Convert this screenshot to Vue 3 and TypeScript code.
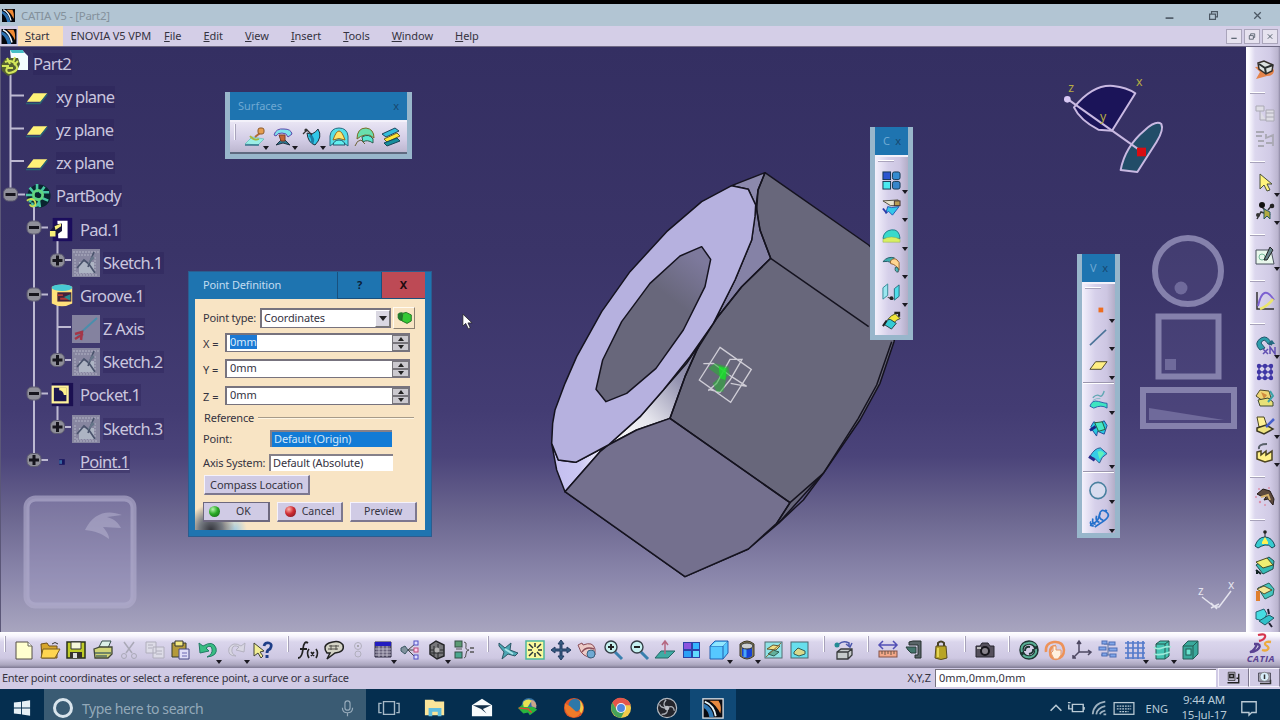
<template>
  <div class="screen">
    <!-- Window title bar -->
    <header class="titlebar">
      <svg class="app-icon" viewBox="0 0 20 20" v-html="icons.catia"></svg>
      <span class="title-text">CATIA V5 - [Part2]</span>
      <div class="window-btns">
        <svg viewBox="0 0 20 20" v-html="icons.minimize"></svg>
        <svg viewBox="0 0 20 20" v-html="icons.restore"></svg>
        <svg viewBox="0 0 20 20" v-html="icons.close"></svg>
      </div>
    </header>

    <nav class="menubar">
      <svg class="menu-icon" viewBox="0 0 20 20" v-html="icons.catia"></svg>
      <span
        v-for="item in menu"
        :key="item"
        class="menu-item"
        :class="{ active: item === 'Start', plain: item.startsWith('ENOVIA') }"
        >{{ item }}</span
      >
      <div class="doc-btns">
        <svg viewBox="0 0 20 20" v-html="icons.minimize"></svg>
        <svg viewBox="0 0 20 20" v-html="icons.restore"></svg>
        <svg viewBox="0 0 20 20" v-html="icons.close"></svg>
      </div>
    </nav>

    <div class="workspace">
      <main class="viewport">
        <!-- Nut solid -->
        <svg class="solid" viewBox="0 0 1200 1320">
          <defs>
            <linearGradient id="chamfer" x1="0" y1="1" x2="1" y2="0">
              <stop offset="0" stop-color="#ffffff" />
              <stop offset="0.35" stop-color="#e4e4ec" />
              <stop offset="0.7" stop-color="#9493b0" />
              <stop offset="1" stop-color="#7a7893" />
            </linearGradient>
            <linearGradient id="chamferLow" x1="0" y1="0" x2="1" y2="0">
              <stop offset="0" stop-color="#c3beef" />
              <stop offset="0.5" stop-color="#cbc7f3" />
              <stop offset="1" stop-color="#ffffff" />
            </linearGradient>
            <linearGradient id="bore" x1="0.85" y1="0.05" x2="0.68" y2="0.35">
              <stop offset="0" stop-color="#7d799c" />
              <stop offset="1" stop-color="#68677b" />
            </linearGradient>
          </defs>
          <g stroke="#15131f" stroke-width="4.500" stroke-linejoin="round">
            <path
              fill="#68677b"
              d="M705 68 1016 285 1130 400 1092 575 1050 700 990 810 880 970 745 1120 655 1197 465 1280 105 1025 235 885Z"
            />
            <path fill="#8c89ad" d="M605 107 705 68 684 120 678 168 655 118Z" />
            <path fill="#8582a6" d="M678 165 690 240 722 325 635 410 560 505 550 520 615 390 665 270Z" />
            <path fill="url(#chamfer)" d="M510 580 465 680 420 805 320 840 235 885 330 800 400 720 470 640Z" />
            <path fill="url(#chamferLow)" d="M65 880 85 930 137 937 235 885 210 905 105 1025 80 960Z" />
            <path
              fill="#74708e"
              d="M420 805 320 840 235 885 210 905 105 1025 465 1280 655 1197 740 1120 780 1058Z"
            />
            <path
              fill="#b6b1df"
              d="M605 107 655 118 677 165 675 200 665 270 615 390 550 520 480 620 400 720 330 800 235 885 137 937 85 930 65 880 68 820 75 780 105 700 140 620 215 485 300 365 410 245 515 155Z"
            />
            <path
              fill="url(#bore)"
              d="M515 290 542 328 525 410 460 540 378 655 290 730 228 755 198 718 218 630 275 515 360 400 450 318Z"
            />
            <path
              fill="none"
              d="M705 68 684 120 680 180 690 240 722 325 1016 530 M722 325 635 410 560 505 500 600 465 680 420 805 780 1058 880 970 M740 1120 780 1058 M1085 575 1040 705 985 805 880 970 820 1050 745 1120"
            />
          </g>
          <path
            d="M570 592 664 658 602 757 508 690Z M520 641 550 640 605 680 650 709 M602 700 650 709 M535 722 560 700 600 628 636 628 600 690 570 727 535 718"
            fill="none"
            stroke="#cfcdd6"
            stroke-width="4"
          />
          <path
            d="M535 655 555 640 595 650 600 675 590 680 580 725 560 725 548 700 570 680Z"
            fill="#20b92c"
            opacity="0.5"
          />
          <path d="M566 648 590 655 586 690 570 685Z" fill="#19e02a" opacity="0.8" />
        </svg>

        <!-- Specification tree -->
        <div class="tree">
          <svg class="tree-lines" viewBox="0 0 180 440">
            <path
              d="M10.5 28V142 M10.5 48.500H24 M10.5 81.500H24 M10.500 114H24 M10.500 147.500H25 M34 158V412 M34 180.500H48 M34 247.500H48 M34 346.500H48 M34 413H48 M57.500 190V213H71 M57.500 257V313H71 M57.500 280H71 M57.500 356V380H71"
            />
            <g v-for="(n, i) in nodes" :key="i" :transform="`translate(${n.x} ${n.y})`">
              <rect class="knob" x="-7" y="-6.500" width="14" height="13" rx="5" />
              <path class="knob-sign" :d="n.plus ? 'M-5 0H5M0 -5V5' : 'M-5 0H5'" />
            </g>
          </svg>
          <div v-for="row in tree" :key="row.label" class="tree-row" :class="'lvl' + row.level">
            <svg
              class="tree-icon"
              :class="row.icon"
              viewBox="0 0 28 28"
              v-html="treeIcons[row.icon]"
            ></svg>
            <span class="tree-label" :class="{ current: row.label === 'Point.1' }">{{
              row.label
            }}</span>
          </div>
        </div>

        <!-- Touch pads of the immersive overlay -->
        <svg class="pad-left" viewBox="0 0 114 114">
          <rect x="3.500" y="3.500" width="107" height="107" rx="9" />
          <path d="M62 35C70 18 84 14 99 20L84 22C92 24 96 29 98 33L80 32C84 37 86 40 86 44C78 38 72 36 62 35Z" />
        </svg>
        <svg class="pads-right" viewBox="0 0 100 196">
          <circle class="ring" cx="50" cy="37" r="33" />
          <circle class="knob-soft" cx="43" cy="54" r="6.500" />
          <rect class="ring" x="20.500" y="82.500" width="60" height="60" />
          <rect class="knob-soft" x="27" y="125" width="11" height="11" />
          <rect class="ring" x="5" y="156" width="91" height="36" />
          <path class="knob-soft" d="M11 174V186H86Z" />
        </svg>

        <!-- 3D compass -->
        <svg class="compass" viewBox="0 0 300 300">
          <path d="M72 142Q130 72 190 78Q230 82 256 100L186 212L145 209Q90 180 72 142Z" fill="#1b1459" />
          <path d="M212 330Q225 260 285 210Q318 180 334 192Q342 210 320 245L262 336Z" fill="#224d68" />
          <path d="M54 118 274 274" />
          <circle cx="52" cy="118" r="10" fill="#d9c9f5" stroke="none" />
          <rect x="261" y="263" width="27" height="26" fill="#d90d12" stroke="none" />
          <text x="55" y="97">z</text>
          <text x="258" y="78">x</text>
          <text x="150" y="183">y</text>
        </svg>

        <svg class="axis" viewBox="0 0 42 34">
          <path d="M7 14 20 24 24 24 36 8 M16 20 22 26 M16 25 24 21" />
          <text x="3" y="12">z</text>
          <text x="33" y="6">x</text>
        </svg>

        <!-- Floating toolbars -->
        <section v-for="bar in floats" :key="bar.title" class="float" :class="bar.kind">
          <div class="float-title"><span>{{ bar.title }}</span><span class="float-x">x</span></div>
          <div class="float-body">
            <i class="grip"></i>
            <template v-for="(t, i) in bar.tools" :key="i">
              <i v-if="t === '|'" class="divider"></i>
              <span v-else class="tool" :class="{ more: t.endsWith('+') }">
                <svg viewBox="0 0 20 20" v-html="iconFor(t)"></svg>
              </span>
            </template>
          </div>
        </section>

        <!-- Point Definition dialog -->
        <section class="dialog">
          <div class="dialog-head">
            <span class="dialog-title">Point Definition</span>
            <span class="head-btn">?</span>
            <span class="head-btn danger">X</span>
          </div>
          <div class="dialog-body">
            <div class="row type-row">
              <label>Point type:</label>
              <div class="combo"><span>Coordinates</span><i class="combo-arrow"></i></div>
              <div class="lock-btn"><svg viewBox="0 0 20 20" v-html="icons.lock"></svg></div>
            </div>
            <div v-for="axis in ['X', 'Y', 'Z']" :key="axis" class="row coord">
              <label>{{ axis }} =</label>
              <div class="spin">
                <span :class="{ selected: axis === 'X' }">{{ coords[axis] }}</span>
                <div class="spin-btns"><i class="up"></i><i class="down"></i></div>
              </div>
            </div>
            <div class="row group"><span>Reference</span><i></i></div>
            <div class="row ref">
              <label>Point:</label><span class="field chosen">Default (Origin)</span>
            </div>
            <div class="row ref axis-row">
              <label>Axis System:</label><span class="field">Default (Absolute)</span>
            </div>
            <button class="btn wide">Compass Location</button>
            <div class="actions">
              <button class="btn ok"><i class="led green"></i>OK</button>
              <button class="btn"><i class="led red"></i>Cancel</button>
              <button class="btn">Preview</button>
            </div>
          </div>
        </section>

        <svg class="pointer" viewBox="0 0 12 18">
          <path d="M1 1V14L4 11L7 17L9 16L6.500 10.500H11Z" fill="#fff" stroke="#222" stroke-width="0.800" />
        </svg>
      </main>

      <aside class="side">
        <template v-for="(t, i) in sideTools" :key="i">
          <i v-if="t === '|'" class="sep"></i>
          <span v-else class="tool" :class="{ more: t.endsWith('+') }">
            <svg viewBox="0 0 20 20" v-html="iconFor(t)"></svg>
          </span>
        </template>
      </aside>
    </div>

    <div class="bottom-bar">
      <template v-for="(t, i) in bottomTools" :key="i">
        <i v-if="t === '|'" class="sep"></i>
        <span v-else class="tool" :class="{ more: t.endsWith('+'), slim: t === 'light' }">
          <svg viewBox="0 0 20 20" v-html="iconFor(t)"></svg>
        </span>
      </template>
      <div class="brand">
        <svg viewBox="0 0 24 20">
          <path d="M9 1Q17-1 16 3Q15 6 10 7" stroke="#d5344d" />
          <path d="M5 10H9Q13 12 8 16Q5 18 1 18Q6 16 8 10" stroke="#5a4292" />
          <path d="M22 8Q16 7 16 10Q16 11 18 12Q21 14 18 16Q16 17 13 16" stroke="#ecaa3c" />
        </svg>
        <span>CATIA</span>
      </div>
    </div>

    <footer class="status">
      <span class="status-msg">Enter point coordinates or select a reference point, a curve or a surface</span>
      <span class="status-xyz">X,Y,Z</span>
      <span class="status-input">0mm,0mm,0mm</span>
      <span class="status-btn"><svg viewBox="0 0 20 20" v-html="icons.stMonitor"></svg></span>
      <span class="status-btn"><svg viewBox="0 0 20 20" v-html="icons.stInfo"></svg></span>
    </footer>

    <!-- Windows taskbar -->
    <div class="taskbar">
      <div class="start"><svg viewBox="0 0 20 20" v-html="icons.windows"></svg></div>
      <div class="search">
        <i class="cortana"></i>
        <span>Type here to search</span>
        <svg viewBox="0 0 20 20" v-html="icons.mic"></svg>
      </div>
      <div v-for="app in apps" :key="app" class="app" :class="{ open: app === 'catiaTask' }">
        <svg viewBox="0 0 24 24" v-html="icons[app]"></svg>
      </div>
      <div class="tray">
        <svg v-for="t in tray" :key="t" :class="t" viewBox="0 0 24 20" v-html="icons[t]"></svg>
        <span class="lang">ENG</span>
        <div class="clock"><span>9:44 AM</span><span>15-Jul-17</span></div>
        <svg class="note" viewBox="0 0 20 20" v-html="icons.note"></svg>
      </div>
    </div>
  </div>
</template>

<script setup lang="ts">
  interface TreeRow {
    label: string;
    level: number;
    icon: string;
  }

  const menu = ['Start', 'ENOVIA V5 VPM', 'File', 'Edit', 'View', 'Insert', 'Tools', 'Window', 'Help'];

  const tree: TreeRow[] = [
    { label: 'Part2', level: 0, icon: 'part' },
    { label: 'xy plane', level: 1, icon: 'plane' },
    { label: 'yz plane', level: 1, icon: 'plane' },
    { label: 'zx plane', level: 1, icon: 'plane' },
    { label: 'PartBody', level: 1, icon: 'body' },
    { label: 'Pad.1', level: 2, icon: 'pad' },
    { label: 'Sketch.1', level: 3, icon: 'sketch' },
    { label: 'Groove.1', level: 2, icon: 'groove' },
    { label: 'Z Axis', level: 3, icon: 'zaxis' },
    { label: 'Sketch.2', level: 3, icon: 'sketch' },
    { label: 'Pocket.1', level: 2, icon: 'pocket' },
    { label: 'Sketch.3', level: 3, icon: 'sketch' },
    { label: 'Point.1', level: 2, icon: 'point' },
  ];

  // Expand / collapse handles of the tree
  const nodes = [
    { x: 10.5, y: 147.5, plus: false },
    { x: 34, y: 180.5, plus: false },
    { x: 34, y: 247.5, plus: false },
    { x: 34, y: 346.5, plus: false },
    { x: 34, y: 413, plus: true },
    { x: 57.5, y: 213.5, plus: true },
    { x: 57.5, y: 313, plus: true },
    { x: 57.5, y: 380, plus: true },
  ];

  const coords: Record<string, string> = { X: '0mm', Y: '0mm', Z: '0mm' };

  // A trailing "+" means the tool has a flyout, "|" is a separator
  const floats = [
    { title: 'Surfaces', kind: 'flat', tools: ['extrude+', 'revolve+', 'sweep+', 'fill', 'loft', 'blend'] },
    { title: 'C', kind: 'tall c', tools: ['join+', 'trim+', 'boundary+', 'fillet+', 'translate+', 'extrapolate'] },
    {
      title: 'V',
      kind: 'tall w',
      tools: ['point+', 'line+', 'plane+', '|', 'project+', 'intersect', 'parallel+', '|', 'circle+', 'helix+'],
    },
  ];

  const sideTools = [
    'wireframe', '|', 'ghostA', 'ghostB', '|', 'arrow+', 'selector+', '|', 'sketcher+', '|', 'law', '|',
    'repeat+', 'grid', 'catalog', 'scan+', 'factory+', '|', 'bird', '|', 'curvature', 'draft', 'draftB', 'porcupine',
  ];

  const bottomTools = [
    '|', 'newDoc', 'open', 'save', 'print', 'cut', 'copy', 'paste', 'undo+', 'redo+', 'help', '|',
    'formula', 'comment', 'light', 'table+', 'relations', 'cage+', 'equiv', '|',
    'fly', 'fit', 'pan', 'rotate', 'zoomIn', 'zoomOut', 'normal', 'quad', 'cube+', 'cylinder+', 'hide', 'swap', '|',
    'box', '|', 'measure', 'caliper', 'weight', '|', 'camera', '|',
    'update', 'manual', 'axes', 'history', 'mesh+', 'bodyA+', 'bodyB',
  ];

  const apps = ['taskview', 'explorer', 'mail', 'idm', 'firefox', 'chrome', 'obs', 'catiaTask'];
  const tray = ['caret', 'battery', 'wifi', 'keyboard'];

  const K = '#20303a';

  const icons: Record<string, string> = {
    catia: `<path d="M0 0H20V20H0Z" fill="#05060c"/><path d="M0 3Q10 6 13 20H8Q6 11 0 7Z" fill="#2b6fb0"/><path d="M2 1Q11 5 14 18" stroke="#e8f5ff" stroke-width="2" fill="none"/><path d="M7 1H16Q19 6 18 15Q14 6 7 1Z" fill="#f08a35"/>`,
    minimize: `<path d="M4 14H16" stroke="#4b5763" stroke-width="2.500"/>`,
    restore: `<path d="M4 8H13V16H4ZM7 8V4H16V12H13" fill="none" stroke="#4b5763" stroke-width="1.800"/>`,
    close: `<path d="M5 5 15 15M15 5 5 15" stroke="#4b5763" stroke-width="2"/>`,
    lock: `<path d="M2 6Q4 3 8 4L7 14Q3 14 2 10Z" fill="#237b2d"/><path d="M8 5 12 4 18 7V14L13 17 7 14Z" fill="#36c936" stroke="#19691e"/>`,
    extrude: `<path d="M0 17 7 10 19 12 13 18Z" fill="#9beee6" stroke="#5fb9b8" stroke-width=".7"/><path d="M0 18H14" stroke="#18607b" stroke-width="1.200"/><path d="M5 9Q9 14 14 12" stroke="#a8b53b" stroke-width="1.800"/><path d="M10 10 15 6" stroke="#b26a35" stroke-width="2"/><rect x="13" y="1" width="6" height="6" rx="2" fill="#e59d4e" stroke="#8e5a2b"/>`,
    revolve: `<path d="M1 8Q3 1 11 2Q18 2 19 7L15 10Q14 6 9 6Q4 6 3 9Z" fill="#7ee2ec" stroke="#5b48ad"/><path d="M3 18 8 13 12 13 17 18 10 16Z" fill="#2a7890" stroke="#234"/><path d="M6 8 12 8 12 14 8 14Z" fill="#c36435" stroke="#7d3f2a"/>`,
    sweep: `<path d="M5 6Q11 9 16 2Q21 10 13 18Q6 16 5 6Z" fill="#32c8e8" stroke="${K}"/><path d="M8 8Q12 12 10 16" stroke="#1b7fa6" stroke-width="3"/><path d="M1 7 5 3M5 3 10 8" stroke="#333" stroke-width="1.200"/><circle cx="4" cy="3" r="1.600" fill="#333"/>`,
    fill: `<path d="M1 19V9Q2 1 10 1T19 9V19L15 16Q10 14 5 16Z" fill="#55dfe8" stroke="#286b82"/><path d="M4 13Q7 4 10 4T16 13Q10 10 4 13Z" fill="#ffe46a" stroke="#9a6b1d"/><path d="M4 18Q5 13 10 13T16 18Z" fill="#62f0ef" stroke="#23556c"/>`,
    loft: `<path d="M2 12Q2 1 11 1Q19 2 19 11Q15 7 10 8Q5 9 2 12Z" fill="#69dfad" stroke="#776d25"/><path d="M7 10Q14 6 18 12V16Q12 12 8 15Z" fill="#58e8d2" stroke="#2c5c4c"/><path d="M0 19Q2 13 6 13L10 17" stroke="#6c6135"/>`,
    blend: `<path d="M1 7 14 1 18 4 5 10Z" fill="#34bedb" stroke="#20465d"/><path d="M3 12 16 6 19 9 6 15Z" fill="#ffe635" stroke="#6e6222"/><path d="M3 16 16 11 19 14 6 19Z" fill="#168e9d" stroke="#164456"/>`,
    join: `<rect x="1" y="1" width="8" height="8" fill="#2b55d0" stroke="#15364e"/><rect x="11" y="1" width="8" height="8" rx="2" fill="#338bd0" stroke="#15364e"/><rect x="1" y="11" width="8" height="8" fill="#4aeaf0" stroke="#15364e"/><rect x="11" y="11" width="8" height="8" rx="2" fill="#3685cb" stroke="#15364e"/>`,
    trim: `<path d="M1 2 17 1 17 7 9 7Z" fill="#e9e4d0" stroke="#4f4d3b"/><path d="M4 15 6 8 10 9 18 8 11 17 7 13Z" fill="#33c8ea" stroke="#2259b5"/><path d="M1 10 5 15" stroke="#2d39a8" stroke-width="2"/><rect x="13" y="2" width="6" height="5" fill="#b89d54" stroke="#433"/>`,
    boundary: `<path d="M1 12Q2 4 10 3T19 12Z" fill="#39dacb" stroke="#22798a"/><path d="M1 13Q10 8 19 13V16H1Z" fill="#d9ef62" stroke="#87a950" stroke-width=".5"/>`,
    fillet: `<path d="M1 7Q6 1 13 3L10 8Q6 6 1 7Z" fill="#3dafb0" stroke="#225c66"/><path d="M9 6Q14 1 18 8V16Q15 10 9 9Z" fill="#ffd590" stroke="#93632f"/><path d="M14 13Q18 12 17 18Q13 18 14 13Z" fill="#4bbfc0" stroke="#355"/>`,
    translate: `<path d="M1 5 6 1V13L1 17Z" fill="#9be6ef" stroke="#368a99"/><path d="M13 6 18 2V14L13 18Z" fill="#4fdde9" stroke="#246f7e"/><path d="M6 15 12 17" stroke="#555" stroke-width="1.200"/><circle cx="10" cy="16" r="2" fill="#222"/>`,
    extrapolate: `<path d="M6 9Q10 4 14 3L19 8Q15 9 12 13Z" fill="#f0e33a" stroke="#47502b"/><path d="M2 14Q6 8 9 9L15 13 10 19Z" fill="#35cad4" stroke="#223f45"/><path d="M1 16 5 10M13 2H18V6" stroke="#222" stroke-width="2.200"/>`,
    point: `<rect x="10" y="8" width="5" height="5" fill="#ee6d1e"/>`,
    line: `<path d="M1 18 18 2" stroke="#4b7398" stroke-width="1.700"/>`,
    plane: `<path d="M1 14 7 6H19L13 14Z" fill="#ffee83" stroke="#4a4628"/>`,
    project: `<path d="M4 7Q8 3 11 5T16 0" stroke="#63a8b4" stroke-width="1.500"/><path d="M4 10Q8 7 12 8" stroke="#83b9c4"/><path d="M1 16Q3 9 10 11T19 13V18Q13 14 5 18Z" fill="#3de4c1" stroke="#2763aa"/>`,
    intersect: `<path d="M2 9 5 4 10 6 16 3 19 8 16 17 9 14 8 19 3 12Z" fill="#28cae1" stroke="#214998"/><path d="M6 5 14 4 17 12 10 14Z" fill="#46e7c5" stroke="#285a36"/><path d="M1 13 7 9" stroke="#15278b" stroke-width="3"/>`,
    parallel: `<path d="M1 11Q6 2 12 2L19 8Q13 11 11 18L6 13Z" fill="#36cde7" stroke="#29558b"/><path d="M9 6Q14 4 16 8L11 14Z" fill="#61f1ba"/><path d="M0 11 6 15" stroke="#282b8b" stroke-width="3"/>`,
    circle: `<circle cx="9.500" cy="10" r="8.500" fill="#d8dcef" stroke="#49809f" stroke-width="1.700"/>`,
    helix: `<path d="M1 17 5 18M17 1 19 2M2 13Q0 17 5 15T11 6T18 3T15 13T6 19M4 10Q3 16 7 16M8 7Q6 13 11 14M12 4Q9 10 15 12" stroke="#2470cb" stroke-width="1.800"/>`,
    wireframe: `<path d="M0 7 5 12 1 19 12 16Q19 16 19 10L15 6" fill="#e5844c"/><path d="M3 3 9 1 18 5 17 11 11 14 4 9Z" fill="#dce2df" stroke="#352f2a" stroke-width="1.500"/><path d="M4 4 10 8 18 5M10 8 11 14" stroke="#2b302f" stroke-width="2"/>`,
    ghostA: `<path d="M1 3H9V8H1ZM5 8V17H11M11 7H19V18H11ZM11 10H19M11 14H19" fill="#dedde5" stroke="#aaa9b4"/>`,
    ghostB: `<path d="M1 3H9M1 7H7M3 12H9M3 17H9M11 5V9L18 6V17M11 14H18" stroke="#aaa9b4" stroke-width="1.800"/>`,
    arrow: `<path d="M5 1V16L9 12 12 18 15 17 12 11H17Z" fill="#fff37c" stroke="#48503b"/>`,
    selector: `<path d="M2 18 6 11 12 13M5 4 15 14M18 3 13 9" stroke="#333" stroke-width="1.500"/><circle cx="7" cy="4" r="3" fill="#111"/><circle cx="17" cy="5" r="2.300" fill="#222"/><circle cx="3" cy="14" r="2" fill="#333"/><path d="M9 8V18L12 15 15 18 15 11Z" fill="#b1aa42" stroke="#285a61"/>`,
    sketcher: `<path d="M1 4H16L19 18H1Z" fill="#e8f7ec" stroke="#49505c"/><circle cx="7" cy="11" r="3" stroke="#76b99a"/><path d="M9 14 15 1 18 4 12 14Z" fill="#68858b" stroke="#222"/>`,
    law: `<path d="M2 1V18H19" stroke="#333" stroke-width="1.500"/><path d="M3 15Q8-8 19 9" stroke="#7c61d1" stroke-width="2"/><path d="M5 18Q13 15 18 8" stroke="#ebe66c" stroke-width="2.500"/>`,
    repeat: `<path d="M5 15Q-2 8 6 3Q13-1 17 10L13 9Q9 2 6 8L10 13Z" fill="#2c9dab" stroke="#24566d"/><path d="M12 9H20L17 5" fill="#246b81"/><path d="M8 14 13 19M13 14 8 19M15 19V12L20 19V12" stroke="#6150b2" stroke-width="1.500"/>`,
    grid: `<path d="M4 3V18M10 3V18M16 3V18M2 4H18M2 10H18M2 16H18" stroke="#4b42aa" stroke-width="1.500"/><g fill="#4037a5"><circle cx="4" cy="4" r="2.200"/><circle cx="10" cy="4" r="2.200"/><circle cx="16" cy="4" r="2.200"/><circle cx="4" cy="10" r="2.200"/><circle cx="10" cy="10" r="2.200"/><circle cx="16" cy="10" r="2.200"/><circle cx="4" cy="16" r="2.200"/><circle cx="10" cy="16" r="2.200"/><circle cx="16" cy="16" r="2.200"/></g>`,
    catalog: `<path d="M1 8 5 2 14 3 16 10 8 13Z" fill="#eed574" stroke="#4e4a2c"/><path d="M6 4 12 7 9 11Z" fill="#cf8b3e"/><path d="M3 12 13 10 18 14V18H5Z" fill="#e8e179" stroke="#3f4a34"/><path d="M15 3 18 8 13 14" stroke="#39a2a8" stroke-width="2"/>`,
    scan: `<path d="M2 2 9 2 12 11 4 12Z" fill="#fff295" stroke="#4d4825"/><path d="M2 13 11 10 18 14 9 19 2 16Z" fill="#eee37f" stroke="#3d3a22" stroke-width="1.500"/><path d="M11 12 19 4" stroke="#4660cb" stroke-width="2.500"/>`,
    factory: `<path d="M2 9 6 8V12L11 8V12L17 8V17L10 19 2 16Z" fill="#fff087" stroke="#4e4623" stroke-width="1.500"/><path d="M4 6Q3 1 12 1" stroke="#59606a" stroke-width="2"/>`,
    bird: `<path d="M2 7 8 2 15 4 19 12 18 18 13 12 9 13 12 8 6 9Z" fill="#5c4a3e" stroke="#241c18"/><path d="M6 10 13 8 15 13" stroke="#d6b26c" stroke-width="2"/><g fill="#dc8fa7"><circle cx="4" cy="2" r="1"/><circle cx="1" cy="10" r="1"/><circle cx="5" cy="15" r="1.200"/><circle cx="10" cy="18" r="1"/><circle cx="14" cy="1" r="1"/></g>`,
    curvature: `<path d="M0 16Q3 7 10 7T20 16L17 18Q14 14 10 15T3 18Z" fill="#36cbd0" stroke="#174b58"/><path d="M7 12 10 7 13 12V14H7Z" fill="#fff253"/><path d="M10 7V2" stroke="#222"/><circle cx="10" cy="2" r="1.800" fill="#222"/>`,
    draft: `<path d="M1 9 14 1 19 5 18 13 8 18Z" fill="#35bbb6" stroke="#214f4e"/><path d="M1 6 12 2 18 9 8 12Z" fill="#f0ed72" stroke="#484d25"/><path d="M1 14 6 18M2 18V14" stroke="#122" stroke-width="2"/>`,
    draftB: `<path d="M3 6 14 1 19 7 18 13 10 17Z" fill="#43c5bf" stroke="#24625c"/><path d="M2 7 9 4 17 8 9 12Z" fill="#f3e894" stroke="#554d2e"/><path d="M3 9V19" stroke="#df7e2e" stroke-width="4"/>`,
    porcupine: `<path d="M1 4 9 1 12 6 8 13 1 11Z" fill="#45dce2" stroke="#276474"/><path d="M4 13 14 7 19 10 10 17Z" fill="#31c1ca" stroke="#205763"/><path d="M13 1 14 6M14 15 17 19" stroke="#223" stroke-width="2"/>`,
    newDoc: `<path d="M2 2H14L18 6V19H2Z" fill="#ffffcf" stroke="#554f48"/><path d="M14 2V6H18" fill="#fff" stroke="#665"/>`,
    open: `<path d="M1 4 7 3 9 6H17V18H2Z" fill="#d7a62c" stroke="#70501a"/><path d="M3 9H20L15 18H1Z" fill="#ffd550" stroke="#785e23"/><path d="M12 4Q15 1 18 4" stroke="#333"/>`,
    save: `<path d="M1 2H19V18H1Z" fill="#bfcb27" stroke="#29301c" stroke-width="1.500"/><path d="M5 2H15V9H5Z" fill="#f6f7da" stroke="#333"/><path d="M4 12H16V18H4Z" fill="#35312d"/><rect x="7" y="13" width="4" height="5" fill="#ddd"/>`,
    print: `<path d="M6 7 9 1H18L15 8Z" fill="#dcefe8" stroke="#354d4a"/><path d="M1 9 7 7H19V14L15 18H2Z" fill="#d1d478" stroke="#404638" stroke-width="1.300"/><path d="M2 13H18M3 16H14" stroke="#526b61" stroke-width="1.500"/>`,
    cut: `<path d="M5 2 13 13M15 2 7 13" stroke="#aaa9b7" stroke-width="1.500"/><circle cx="5" cy="16" r="2.500" stroke="#aaa9b7"/><circle cx="15" cy="16" r="2.500" stroke="#aaa9b7"/>`,
    copy: `<path d="M1 2H11V13H1ZM8 7H19V18H8ZM3 5H8M3 8H7M11 11H17M11 14H17" fill="#dddce7" stroke="#b0aebc"/>`,
    paste: `<path d="M1 3H15V17H1Z" fill="#b49a3a" stroke="#353b2c"/><path d="M4 1H12V6H4Z" fill="#f4e982" stroke="#333"/><path d="M8 9H18V19H8Z" fill="#dedcf7" stroke="#494a86"/><path d="M11 13H16M11 16H16" stroke="#6b67b1"/>`,
    undo: `<path d="M1 3 2 13 11 11 8 8Q13 4 14 9T9 17Q20 16 18 8Q15 0 5 6Z" fill="#38bd83" stroke="#237b65"/>`,
    redo: `<path d="M19 3 18 12 10 10 13 7Q7 4 6 9T10 16Q1 16 3 8Q7 1 15 6Z" fill="#d8d6e2" stroke="#b3b1bf"/>`,
    help: `<path d="M1 3V16L5 13 8 18 10 16 7 12 11 11Z" fill="#f2ee94" stroke="#414335"/><path d="M11 6Q12 2 16 3T17 9Q14 10 14 13" stroke="#1e3e87" stroke-width="2.800"/><rect x="12.500" y="15" width="3" height="3" fill="#1e3e87"/>`,
    formula: `<path d="M0 18Q4 18 5 9T10 3M2 9H9" stroke="#222" stroke-width="1.800"/><path d="M11 9Q8 13 11 18M18 9Q21 13 18 18M13 12 16 16M16 12 13 16" stroke="#222" stroke-width="1.600"/>`,
    comment: `<path d="M3 13Q-2 6 5 3Q15-1 19 5Q21 12 11 13L3 19 6 13Z" fill="#d5d4c6" stroke="#222" stroke-width="1.500"/><path d="M5 6H15M4 9H14M7 5V10M12 5V10" stroke="#504e49"/>`,
    light: `<circle cx="10" cy="6" r="3.500" stroke="#b1afbd"/><circle cx="10" cy="14" r="3" stroke="#b1afbd"/><circle cx="10" cy="6" r="1" fill="#999"/>`,
    table: `<path d="M2 2H18V17H2Z" fill="#68637b" stroke="#29273d"/><path d="M2 2H18V6H2Z" fill="#221cc0"/><path d="M2 9H18M2 12H18M2 15H18M6 6V17M10 6V17M14 6V17" stroke="#cbc8d6" stroke-width=".8"/>`,
    relations: `<path d="M8 10 15 4M8 10H15M8 10 15 17" stroke="#444"/><path d="M1 8 5 6 8 10 5 14 1 11Z" fill="#80929d" stroke="#3c5964"/><rect x="14" y="1" width="4" height="4" fill="#ddf" stroke="#514fc2"/><rect x="14" y="8" width="4" height="4" fill="#fce" stroke="#bb4c78"/><rect x="14" y="15" width="4" height="4" fill="#ddf" stroke="#514fc2"/>`,
    cage: `<path d="M3 5 9 1 17 5V16L10 19 3 14Z" fill="#77777b" stroke="#252629" stroke-width="1.500"/><path d="M7 6V16M11 4V18M3 10H17M4 13H16" stroke="#292b2c"/><circle cx="10" cy="10" r="2.500" fill="#b3b2b3"/>`,
    equiv: `<rect x="1" y="1" width="7" height="6" fill="#5c9b74" stroke="#344f44"/><rect x="1" y="12" width="7" height="6" fill="#4ba78f" stroke="#344f44"/><path d="M2 9H8M10 2Q13 2 12 6T15 10Q12 10 12 14T10 18" stroke="#555"/><path d="M16 8H20M16 12H20" stroke="#555" stroke-width="1.500"/>`,
    fly: `<path d="M1 3 7 8 13 3 12 10 20 13 17 16 10 14 4 19 6 12 1 6Z" fill="#4ca6b4" stroke="#2b5665"/><path d="M7 9 15 14" stroke="#a8e4e8" stroke-width="2"/>`,
    fit: `<rect x="1" y="1" width="18" height="18" fill="#fbf99d" stroke="#4db69c" stroke-width="1.500"/><path d="M4 4 8 8M16 4 12 8M4 16 8 12M16 16 12 12M3 10H7M13 10H17M10 3V7M10 13V17" stroke="#26353a" stroke-width="1.500"/>`,
    pan: `<path d="M10 0 13 4H11V9H16V7L20 10 16 13V11H11V16H13L10 20 7 16H9V11H4V13L0 10 4 7V9H9V4H7Z" fill="#355a81" stroke="#243c62"/>`,
    rotate: `<path d="M1 5 5 3 6 5Q16 1 18 9V15L13 18 7 15 4 12Z" fill="#edcbc7" stroke="#8a4c58"/><path d="M5 12Q9 6 17 9" stroke="#8a4c58" stroke-width="1.500"/><circle cx="14" cy="14" r="4" fill="#6fa9d3" stroke="#39617e"/>`,
    zoomIn: `<path d="M12 12 19 19" stroke="#397fae" stroke-width="3"/><circle cx="8" cy="7" r="6" fill="#c6f1f0" stroke="#343e46" stroke-width="1.400"/><path d="M5 7H11M8 4V10" stroke="#222" stroke-width="2"/>`,
    zoomOut: `<path d="M12 12 19 19" stroke="#397fae" stroke-width="3"/><circle cx="8" cy="7" r="6" fill="#c6f1f0" stroke="#343e46" stroke-width="1.400"/><path d="M5 7H11" stroke="#222" stroke-width="2"/>`,
    normal: `<path d="M0 18 6 11H20L13 18Z" fill="#3eaba4" stroke="#276665"/><path d="M10 14V2M7 5 10 1 13 5" stroke="#b56781" stroke-width="1.500"/>`,
    quad: `<rect x="1" y="2" width="17" height="16" fill="#2c42a7"/><rect x="2" y="3" width="7" height="6" fill="#8c53df"/><rect x="11" y="3" width="6" height="6" fill="#35b4ff"/><rect x="2" y="11" width="7" height="6" fill="#2da1f7"/><rect x="11" y="11" width="6" height="6" fill="#61dbff"/>`,
    cube: `<path d="M1 6 6 1H19V13L14 19H1Z" fill="#56c8ff" stroke="#235fae"/><path d="M1 6H14V19M14 6 19 1" stroke="#235fae"/><path d="M2 6 7 2H18L14 6Z" fill="#91e7ff"/>`,
    cylinder: `<path d="M3 4Q10-2 17 4V16Q10 22 3 16Z" fill="#827b58" stroke="#3d3928"/><path d="M5 7V16Q10 20 15 16V7Z" fill="#1741d5"/><path d="M8 8V17" stroke="#49a6f5" stroke-width="3"/><ellipse cx="10" cy="6" rx="6" ry="3" fill="#cbcfd0" stroke="#333"/>`,
    hide: `<rect x="1" y="2" width="17" height="16" fill="#8fe3e6" stroke="#536b70"/><path d="M3 9 9 5 16 6 12 10Z" fill="#f1df83" stroke="#645a35"/><path d="M4 14 9 10 15 12 10 16Z" fill="#63b09b" stroke="#2d5e52"/><path d="M2 17 17 3" stroke="#866c3c"/>`,
    swap: `<rect x="1" y="2" width="17" height="16" fill="#67dfed" stroke="#4d666f"/><path d="M4 12 8 8 15 11V14L9 16 4 14Z" fill="#d9d88a" stroke="#315e58"/>`,
    box: `<path d="M3 12 7 9H18V15L14 19H3ZM3 12H14V19M14 12 18 9" fill="#c6cbcb" stroke="#383b3c" stroke-width="1.300"/><path d="M5 4Q9 0 15 3V6M12 4 16 7 18 3" stroke="#4b57ac" stroke-width="1.500"/><circle cx="3" cy="5" r="2.500" fill="#238b94"/>`,
    measure: `<path d="M1 5H19M5 1 1 5 5 9M15 1 19 5 15 9" stroke="#514fb5" stroke-width="1.500"/><rect x="1" y="11" width="18" height="6" fill="#f2a789" stroke="#835144"/><path d="M4 11V14M7 11V15M10 11V14M13 11V15M16 11V14" stroke="#654"/>`,
    caliper: `<path d="M8 1H16V18H10V15H13V5H4V2Z" fill="#596568" stroke="#27302f"/><path d="M1 7H11V13H6L3 10Z" fill="#43746c" stroke="#293f3a"/>`,
    weight: `<path d="M7 6V3Q10 0 13 3V6" stroke="#464028" stroke-width="2"/><path d="M5 6H15L16 18Q10 21 4 18Z" fill="#b8a425" stroke="#574b22"/><path d="M7 8V17" stroke="#e5d557" stroke-width="2"/>`,
    camera: `<path d="M1 6H5L7 3H13L15 6H19V17H1Z" fill="#55505c" stroke="#282630"/><circle cx="10" cy="11" r="4" fill="#88838c" stroke="#17151b" stroke-width="2"/><rect x="2" y="7" width="4" height="2" fill="#bbb"/>`,
    update: `<circle cx="10" cy="10" r="7.500" stroke="#1d3531" stroke-width="4.500"/><path d="M3 12Q1 4 9 3Q14 2 17 6M17 9Q18 15 12 17Q7 18 4 15" stroke="#58ae94" stroke-width="2"/><path d="M6 11Q6 6 11 7M14 9Q15 13 10 14" stroke="#1d3531" stroke-width="2"/>`,
    manual: `<path d="M1 12Q0 3 9 2T19 10Q19 18 11 19Q5 19 5 12Q5 6 11 6" stroke="#ed9259" stroke-width="2.500"/><path d="M8 11V6H11V10H16V15L13 19H9L6 13Z" fill="#fff0df" stroke="#e69866"/>`,
    axes: `<path d="M7 12V1M5 4 7 1 9 4M7 12H19M16 10 19 12 16 15M7 12 1 18M1 15V18H4" stroke="#4d4862" stroke-width="1.500"/>`,
    history: `<path d="M6 4H14M10 4V15M3 15H17M10 9H18" stroke="#58739c"/><g fill="#80a6e8" stroke="#4e6eb5"><rect x="4" y="1" width="5" height="3"/><rect x="11" y="2" width="6" height="3"/><rect x="1" y="7" width="7" height="3"/><rect x="11" y="8" width="8" height="3"/><rect x="4" y="13" width="5" height="3"/><rect x="12" y="14" width="6" height="3"/></g>`,
    mesh: `<path d="M3 1V19M8 1V19M13 1V19M18 1V19M0 3H20M0 8H20M0 13H20M0 18H20" stroke="#547bcb" stroke-width="1.700"/>`,
    bodyA: `<path d="M3 4 7 1H16V16L12 19H3Z" fill="#44c4b3" stroke="#23564f"/><path d="M3 4H12V19M12 4 16 1" stroke="#24564f"/><path d="M1 7Q3 10 9 8T18 7M1 14Q7 16 17 12" stroke="#9deada" stroke-width="1.600"/>`,
    bodyB: `<path d="M3 6 8 1H18V14L13 19H3Z" fill="#39a99c" stroke="#225b54"/><path d="M3 6H13V19M13 6 18 1" stroke="#245d55"/><rect x="6" y="9" width="5" height="6" fill="#6be3cf" stroke="#225b54"/>`,
    stMonitor: `<path d="M3 3H12V14H3Z" fill="#b8b5c6" stroke="#333"/><path d="M5 6H10V10H5ZM14 11H17M17 5V17H2" fill="none" stroke="#222" stroke-width="1.800"/>`,
    stInfo: `<path d="M2 4H18V15H2Z" fill="#a9a6b5" stroke="#373543"/><circle cx="10" cy="9" r="6" fill="#d9effb" stroke="#777"/><path d="M10 6V12M4 18H18V13" stroke="#333" stroke-width="2" fill="none"/>`,
    windows: `<path d="M1 4 9 3V9.500H1ZM10 2.800 19 1.500V9.500H10ZM1 10.500H9V17L1 16ZM10 10.500H19V18.500L10 17.200Z" fill="#e6f0f6"/>`,
    mic: `<rect x="7" y="1" width="6" height="11" rx="3" fill="none" stroke="#96aaba" stroke-width="1.400"/><path d="M4 9Q4 15 10 15T16 9M10 15V19" fill="none" stroke="#96aaba" stroke-width="1.400"/>`,
    taskview: `<path d="M6 5H18V19H6ZM4 7H1V17H4M20 7H23V17H20" fill="none" stroke="#a6b9c7" stroke-width="1.500"/>`,
    explorer: `<path d="M1 3H10L12 5H22V20H1Z" fill="#fbe59a"/><path d="M5 12H19V21H15V16H9V21H5Z" fill="#5fbde1"/>`,
    mail: `<path d="M1 9 12 2 23 9V21H1Z" fill="#f8fbfd"/><path d="M2 9 22 9 13 13 17 18 11 13Z" fill="#14304a"/>`,
    idm: `<circle cx="13" cy="9" r="8" fill="#3372a4"/><path d="M7 5Q12 1 16 4L11 12 6 10Z" fill="#e8e254"/><path d="M15 3Q22 4 21 12L16 10Z" fill="#caa48b"/><path d="M1 12 7 8V11L18 11 22 14 14 20 12 17 7 18Z" fill="#2ab63c"/><path d="M2 12 12 13 16 17" stroke="#e44536" stroke-width="1.500" fill="none"/>`,
    firefox: `<circle cx="12" cy="12" r="11" fill="#e25528"/><circle cx="13" cy="9" r="7" fill="#2e78a9"/><path d="M2 7Q8 9 12 14T20 14Q18 23 10 22Q1 19 2 7Z" fill="#ef7b29"/><path d="M18 3Q25 11 20 18L18 15Q20 8 18 3Z" fill="#f4c845"/>`,
    chrome: `<circle cx="12" cy="12" r="11" fill="#f2cb4a"/><path d="M2.500 6Q8-2 17 2.500Q22 5 22.500 9H12L8 15Z" fill="#e4554b"/><path d="M2.500 6Q-1 14 5 20Q8 23 12 23L16 15H8Z" fill="#46a35a"/><circle cx="12" cy="12" r="5.500" fill="#f1f4f8"/><circle cx="12" cy="12" r="4.300" fill="#4e86df"/>`,
    obs: `<circle cx="12" cy="12" r="10.500" fill="#24252c" stroke="#b4b9c0" stroke-width="1.300"/><path d="M11 3Q6 9 12 12Q19 8 20 15M12 12Q14 19 6 19M12 12Q5 12 4 8" fill="none" stroke="#aaaeb6" stroke-width="1.500"/><circle cx="12" cy="12" r="2.500" fill="#b8bbc3"/>`,
    catiaTask: `<rect x="1" y="2" width="22" height="21" fill="#090a11" stroke="#d5dbe0" stroke-width="1.500"/><path d="M2 7Q11 10 13 22H8Q7 15 2 12Z" fill="#2f78b5"/><path d="M3 5Q13 9 15 21" stroke="#e2f0f5" stroke-width="2" fill="none"/><path d="M8 4H18Q22 10 20 18Q16 9 8 4Z" fill="#e88940"/>`,
    caret: `<path d="M6 13 12 7 18 13" fill="none" stroke="#bacad5" stroke-width="1.800"/>`,
    battery: `<path d="M8 6H20V14H8ZM21 9V12M4 6V11H8V6M3 4H6" fill="none" stroke="#bacad5" stroke-width="1.600"/>`,
    wifi: `<path d="M5 17Q6 5 19 3M9 17Q10 10 19 8M13 17Q14 14 19 13M17 17H20" fill="none" stroke="#9eb1c0" stroke-width="2"/>`,
    keyboard: `<rect x="1" y="4" width="22" height="13" fill="none" stroke="#bacad5" stroke-width="1.400"/><path d="M4 8H20M4 11H20M7 14H17" stroke="#bacad5" stroke-width="1.300" stroke-dasharray="2 1"/>`,
    note: `<path d="M2 3H18V15H13L10 18V15H2Z" fill="none" stroke="#bacad5" stroke-width="1.500"/>`,
  };

  const treeIcons: Record<string, string> = {
    part: `<path d="M10 0H22L28 6V20H12Z" fill="#f4fdff"/><path d="M10 0H23L24 3H12Z" fill="#46bfc7"/><path d="M1 15 5 9 10 8 18 8 20 14 16 23 8 26 2 21Z" fill="#536032"/><path d="M2 16H9M7 8 10 14M15 7 13 13M5 12Q12 9 16 15T9 23Q5 22 7 18H13M18 11 14 15" stroke="#d3e75b" stroke-width="2" fill="none"/>`,
    plane: `<path d="M2 19 9 10H24L17 19Z" fill="#fff277"/><path d="M1 21H16L24 11" stroke="#286474" stroke-width="1.500" fill="none"/>`,
    body: `<circle cx="15" cy="14" r="12.500" fill="#09252f"/><path d="M13 1V10M5 5 10 11M1 13H8M21 4 16 11M26 10H18M25 19 18 16M16 26 15 19M5 21Q6 16 12 17T13 24Q7 26 8 21" stroke="#49c7a4" stroke-width="2.800" fill="none"/><circle cx="14" cy="13" r="5" fill="none" stroke="#61d67f" stroke-width="3"/><path d="M2 19Q6 16 9 18T11 24Q7 27 5 23" stroke="#cadf52" stroke-width="2" fill="none"/>`,
    pad: `<path d="M4 1H25V26H4Z" fill="#1b0d5d"/><path d="M9 4H20V23H10Z" fill="#fff"/><path d="M1 15 7 8 14 7V15L7 20 1 21Z" fill="#18163c"/><path d="M1 15H7V21H1ZM6 10 13 7V10L7 14Z" fill="#f7ee79"/>`,
    sketch: `<rect x="0" y="0" width="28" height="28" fill="#8786a0"/><path d="M1 3H27M2 26H26M3 6H22M3 10V24H23V8" stroke="#b2b3c5" stroke-dasharray="2 1" fill="none"/><path d="M7 13H22V24H7Z" fill="#adb4c3"/><path d="M5 19 12 11 17 15 23 24M16 18 22 3" stroke="#4a536c" stroke-width="1.700" fill="none"/><path d="M15 16 20 7 23 9Z" fill="#667589"/>`,
    groove: `<path d="M3 4Q14-1 25 4V22Q14 28 3 22Z" fill="#ffe17b"/><ellipse cx="14" cy="5" rx="11" ry="3.500" fill="#48c9d4"/><path d="M9 10H24V20H9Z" fill="#44233c"/><path d="M9 13H15M12 17H23" stroke="#b13c37" stroke-width="2"/><path d="M16 15 23 12V19Z" fill="#258c90"/>`,
    zaxis: `<rect width="28" height="28" fill="#84829f"/><path d="M5 21 25 3" stroke="#4a8eac" stroke-width="2"/><path d="M3 19 10 17 9 25M3 24 11 19" stroke="#a43648" stroke-width="2.500" fill="none"/>`,
    pocket: `<path d="M3 1H26V26H3Z" fill="#1b1051"/><path d="M4 5H20V22H4Z" fill="#1d174f" stroke="#fff29a" stroke-width="2.500"/><path d="M11 6H19V14H16Q15 9 11 9Z" fill="#fff18a"/>`,
    point: `<rect x="11" y="11" width="6" height="6" fill="#17155f"/><rect x="11" y="12" width="3" height="4" fill="#37649e"/>`,
  };

  const iconFor = (tool: string): string => icons[tool.replace('+', '')];
</script>

<style>
  html,
  body {
    background: #000;
    overflow: hidden;
  }
</style>

<style scoped>
  .screen {
    width: 1280px;
    height: 720px;
    padding-top: 4px;
    box-sizing: border-box;
    display: flex;
    flex-direction: column;
    overflow: hidden;
    background: #000;
    font-family: 'Noto Sans', 'Open Sans', sans-serif;
    font-size: 11px;
    color: #35333f;
  }

  .screen * {
    box-sizing: border-box;
  }

  svg {
    display: block;
    flex: none;
    overflow: visible;
  }

  /* ===== Title and menu bars ===== */
  .titlebar {
    height: 22px;
    flex: none;
    display: flex;
    align-items: center;
    background: #b2c5d3;
    padding-left: 2px;
  }

  .app-icon {
    width: 13px;
    height: 13px;
  }

  .title-text {
    margin-left: 6px;
    color: #84919c;
    font-size: 11.5px;
    letter-spacing: -0.3px;
  }

  .window-btns {
    margin-left: auto;
    display: flex;
    gap: 31px;
    padding-right: 16px;
  }

  .window-btns svg {
    width: 13px;
    height: 13px;
  }

  .menubar {
    height: 21px;
    flex: none;
    display: flex;
    align-items: center;
    background: #d4cee7;
    border-bottom: 1px solid #6e6984;
  }

  .menu-icon {
    width: 18px;
    height: 15px;
  }

  .menu-item {
    padding: 0 11px 1px;
    line-height: 19px;
    font-size: 11px;
    letter-spacing: -0.05px;
  }

  .menu-item::first-letter {
    text-decoration: underline;
  }

  .menu-item.active {
    background: #fbdfb4;
    padding: 0 14px 1px 7px;
    margin-right: -4px;
  }

  .menu-item.plain {
    padding-right: 2px;
    letter-spacing: -0.12px;
  }

  .menu-item.plain::first-letter {
    text-decoration: none;
  }

  .doc-btns {
    margin-left: auto;
    display: flex;
    gap: 2px;
    padding-right: 2px;
  }

  .doc-btns svg {
    width: 16px;
    height: 15px;
    padding: 2px;
    background: #e6e2ef;
    border: 1px solid #aaa5bb;
  }

  /* ===== Work area ===== */
  .workspace {
    height: 585px;
    flex: none;
    display: flex;
  }

  .viewport {
    position: relative;
    flex: 1;
    overflow: hidden;
    background: linear-gradient(
      #342f62 0%,
      #3a3468 35%,
      #433c73 62%,
      #4b447a 70%,
      #6b668f 80%,
      #8985aa 90%,
      #a8a5bf 100%
    );
    border-left: 1px solid #5b5778;
  }

  .solid {
    position: absolute;
    left: 529px;
    top: 103px;
    width: 400px;
    height: 440px;
  }

  /* ===== Specification tree ===== */
  .tree {
    position: absolute;
    left: -1px;
    top: 0;
  }

  .tree-lines {
    position: absolute;
    left: 0;
    top: 0;
    width: 180px;
    height: 440px;
    fill: none;
    stroke: #bdb9d2;
    stroke-width: 2;
  }

  .knob {
    fill: #8f8f99;
    stroke: #5d5b70;
    stroke-width: 1;
  }

  .knob-sign {
    stroke: #16151d;
    stroke-width: 3;
  }

  .tree-row {
    position: relative;
    height: 33.2px;
    display: flex;
    align-items: center;
    gap: 5px;
  }

  .lvl0 {
    padding-left: 0;
  }

  .lvl1 {
    padding-left: 25px;
  }

  .lvl2 {
    padding-left: 49px;
  }

  .lvl3 {
    padding-left: 72px;
    gap: 3px;
  }

  .tree-icon {
    width: 26px;
    height: 26px;
  }

  .tree-icon.part {
    width: 28px;
    height: 28px;
  }

  .tree-icon.sketch,
  .tree-icon.zaxis {
    width: 28px;
    height: 28px;
  }

  .tree-label {
    color: #c9c5de;
    font-size: 16.5px;
    letter-spacing: -0.7px;
    line-height: 22px;
    background: rgba(40, 32, 86, 0.35);
    padding-right: 1px;
  }

  .lvl1 .tree-label {
    letter-spacing: -0.8px;
  }

  .tree-label.current {
    text-decoration: underline;
  }

  /* ===== Immersive overlay ===== */
  .pad-left {
    position: absolute;
    left: 22px;
    top: 448px;
    width: 114px;
    height: 114px;
  }

  .pad-left rect {
    fill: rgba(170, 165, 205, 0.32);
    stroke: rgba(176, 172, 205, 0.65);
    stroke-width: 6;
  }

  .pad-left path {
    fill: rgba(200, 197, 222, 0.4);
  }

  .pads-right {
    position: absolute;
    left: 1137px;
    top: 187px;
    width: 100px;
    height: 196px;
  }

  .ring {
    fill: rgba(120, 112, 165, 0.15);
    stroke: #8581ac;
    stroke-width: 6;
  }

  .knob-soft {
    fill: #6f6a9b;
  }

  .compass {
    position: absolute;
    left: 1049px;
    top: 13px;
    width: 100px;
    height: 100px;
    fill: none;
    stroke: #c9b9e2;
    stroke-width: 6;
    stroke-linejoin: round;
  }

  .compass text {
    fill: #b7ad43;
    stroke: none;
    font-size: 37px;
  }

  .axis {
    position: absolute;
    left: 1194px;
    top: 536px;
    width: 42px;
    height: 34px;
    fill: none;
    stroke: #e4e3ee;
    stroke-width: 1.5;
  }

  .axis text {
    fill: #e4e3ee;
    stroke: none;
    font-size: 12px;
  }

  .pointer {
    position: absolute;
    left: 461px;
    top: 266px;
    width: 11px;
    height: 17px;
  }

  /* ===== Toolbars ===== */
  .tool {
    position: relative;
    flex: none;
    width: 26.2px;
    height: 26.2px;
    display: flex;
    align-items: center;
    justify-content: center;
  }

  .tool svg {
    width: 20px;
    height: 20px;
    fill: none;
  }

  .tool.more::after {
    content: '';
    position: absolute;
    right: 0;
    bottom: 0;
    border: 3.5px solid transparent;
    border-top: 4px solid #1a1820;
    border-bottom: 0;
  }

  .float {
    position: absolute;
    border: 5px solid #98b6cb;
    border-top-width: 0;
    background: #d8d3ea;
    display: flex;
    flex-direction: column;
  }

  .float-title {
    height: 28px;
    flex: none;
    display: flex;
    align-items: center;
    justify-content: space-between;
    background: #1e74b0;
    padding: 0 8px 1px;
    color: #6fa9d3;
    font-size: 11px;
  }

  .float-x {
    color: #17486f;
  }

  .float-body {
    flex: 1;
    display: flex;
    border-top: 2px solid #f3f1fa;
    background: linear-gradient(#e9e5f4, #d2cce5 60%, #bdb7d0);
  }

  .flat {
    left: 224px;
    top: 45px;
    width: 187px;
    height: 67px;
  }

  .flat .float-body {
    border-bottom: 2px solid #5f6a80;
    align-items: center;
  }

  .flat .grip {
    width: 2px;
    height: 16px;
    margin: -10px 5px 0 4px;
    background: #f8f7fd;
    border-right: 1px solid #a9a4bc;
  }

  .flat .more {
    width: 28.3px;
  }

  .tall {
    width: 43px;
  }

  .tall .float-body {
    flex-direction: column;
    align-items: center;
    background: linear-gradient(90deg, #f4f1fc, #d6d0ea 40%, #cdc6e2 75%, #b3adc7);
  }

  .tall .float-title {
    padding: 0 7px 1px 8px;
  }

  .tall .grip {
    width: 16px;
    height: 2px;
    flex: none;
    align-self: flex-start;
    margin: 3px 0 4px 3px;
    background: #fff;
    border-bottom: 1px solid #aaa4bd;
  }

  .tall .more {
    height: 28.2px;
    width: 33px;
  }

  .tall .tool svg {
    width: 19px;
    height: 19px;
  }

  .c {
    left: 869px;
    top: 80px;
    height: 213px;
  }

  .w {
    left: 1076px;
    top: 207px;
    height: 284px;
  }

  .w .grip {
    margin-bottom: 6px;
  }

  .divider {
    width: 31px;
    height: 2px;
    margin: 2px 0 3px;
    background: #fff;
    border-top: 1px solid #9b96ae;
  }

  .side {
    width: 34px;
    display: flex;
    flex-direction: column;
    align-items: center;
    padding-top: 10px;
    background: linear-gradient(90deg, #fff 0, #fbfaff 3px, #dcd7ee 9px, #d1cbe6 24px, #bab4ce 32px, #8f8aa5);
  }

  .side .tool {
    width: 34px;
    padding-left: 4px;
    height: 26px;
  }

  .side .more {
    height: 28.2px;
  }

  .side .sep {
    width: 15px;
    height: 2px;
    flex: none;
    margin: 9px 0 6px 4px;
    align-self: flex-start;
    background: #fff;
    border-bottom: 1px solid #a7a2ba;
  }

  .bottom-bar {
    height: 36px;
    flex: none;
    display: flex;
    align-items: center;
    background: linear-gradient(#fff 0, #f7f5fd 4px, #dad5ec 10px, #cec8e2 26px, #aaa5bd 33px, #7d7892 36px);
  }

  .bottom-bar .more {
    width: 28px;
    height: 26px;
  }

  .bottom-bar .slim {
    width: 22px;
  }

  .bottom-bar .more::after {
    bottom: -1px;
  }

  .bottom-bar .sep {
    width: 2px;
    height: 16px;
    flex: none;
    margin: -12px 6px 0 10px;
    background: #fff;
    border-right: 1px solid #a7a2ba;
  }

  .bottom-bar .sep:first-child {
    margin-left: 4px;
    margin-right: 5px;
  }

  .brand {
    margin: -3px 5px 0 auto;
    display: flex;
    flex-direction: column;
    align-items: center;
  }

  .brand svg {
    width: 24px;
    height: 20px;
    fill: none;
    stroke-width: 2.3;
  }

  .brand span {
    font: italic bold 9.5px/9px 'Open Sans', sans-serif;
    letter-spacing: 0.5px;
    color: #5a4292;
  }

  /* ===== Dialog ===== */
  .dialog {
    position: absolute;
    left: 187px;
    top: 224px;
    width: 244px;
    height: 266px;
    background: #1e74b0;
    border: 1px solid #2b5d8f;
    padding: 0 6px 6px;
    display: flex;
    flex-direction: column;
  }

  .dialog-head {
    height: 27px;
    flex: none;
    display: flex;
    align-items: stretch;
    line-height: 25px;
  }

  .dialog-title {
    flex: 1;
    padding-left: 8px;
    color: #c2dcf0;
    font-size: 11px;
    letter-spacing: -0.15px;
  }

  .head-btn {
    width: 44px;
    text-align: center;
    font-weight: bold;
    color: #0b2038;
    border-left: 1px solid #19507e;
    border-bottom: 1px solid #19507e;
  }

  .head-btn.danger {
    background: #bd4a55;
    color: #1f0a10;
  }

  .dialog-body {
    flex: 1;
    padding: 6px 8px 0;
    display: flex;
    flex-direction: column;
    background:
      radial-gradient(ellipse at 16px 100%, #33343c 0, #777c83 12px, transparent 24px),
      radial-gradient(ellipse at 40px 100%, #a4cce0 0, transparent 12px),
      #f8e4c4;
  }

  .row {
    display: flex;
    align-items: center;
    flex: none;
  }

  .type-row {
    height: 25px;
    margin-bottom: 2px;
  }

  .type-row label {
    width: 57px;
    font-size: 11px;
    letter-spacing: -0.2px;
    white-space: nowrap;
  }

  .combo {
    width: 131px;
    height: 20px;
    display: flex;
    justify-content: space-between;
    background: #fff;
    border: 1px solid #77737e;
    border-width: 2px 1px 1px 2px;
    padding-left: 2px;
    line-height: 16px;
    font-size: 11px;
    letter-spacing: -0.15px;
  }

  .combo-arrow {
    width: 15px;
    background: #dad8e2;
    border: 1px solid #fff;
    border-right-color: #777;
    border-bottom-color: #777;
    display: flex;
    align-items: center;
    justify-content: center;
  }

  .combo-arrow::after {
    content: '';
    border: 4px solid transparent;
    border-top: 5px solid #222;
    border-bottom: 0;
  }

  .lock-btn {
    width: 22px;
    height: 22px;
    margin-left: 2px;
    display: flex;
    align-items: center;
    justify-content: center;
    border: 1px solid #fffaf0;
    border-right-color: #8d8172;
    border-bottom-color: #8d8172;
  }

  .lock-btn svg {
    width: 17px;
    height: 17px;
  }

  .coord {
    height: 26.3px;
    align-items: flex-start;
  }

  .coord label {
    width: 22px;
    line-height: 23px;
    white-space: nowrap;
  }

  .spin {
    width: 185px;
    height: 19px;
    margin-top: 1px;
    display: flex;
    justify-content: space-between;
    align-items: flex-start;
    background: #fff;
    border: 1px solid #77737e;
    border-width: 2px 1px 1px 2px;
    padding-left: 3px;
    line-height: 14px;
  }

  .selected {
    background: #1b79d4;
    color: #d9ebfb;
  }

  .spin-btns {
    width: 17px;
    height: 16px;
    display: flex;
    flex-direction: column;
  }

  .spin-btns i {
    flex: 1;
    display: flex;
    align-items: center;
    justify-content: center;
    background: #cbc9cf;
    border: 1px solid #77757b;
  }

  .spin-btns i::after {
    content: '';
    border: 3.5px solid transparent;
  }

  .spin-btns .up::after {
    border-top-width: 0;
    border-bottom: 4px solid #222;
  }

  .spin-btns .down::after {
    border-bottom-width: 0;
    border-top: 4px solid #222;
  }

  .group {
    height: 16px;
    margin-top: -1px;
    gap: 4px;
    letter-spacing: -0.2px;
    padding-left: 1px;
  }

  .group i {
    flex: 1;
    height: 2px;
    margin-right: 3px;
    background: #fff6e4;
    border-top: 1px solid #a79b89;
  }

  .ref {
    height: 24px;
    margin-top: 1px;
  }

  .axis-row {
    margin-top: 0;
  }

  .ref label {
    width: 66px;
    letter-spacing: -0.15px;
    white-space: nowrap;
  }

  .field {
    width: 124px;
    height: 17px;
    background: #fff;
    border: 1px solid #858089;
    border-width: 2px 0 0 2px;
    padding-left: 2px;
    line-height: 13px;
    letter-spacing: -0.15px;
  }

  .field.chosen {
    width: 122px;
    margin-left: 1px;
    background: #127bd6;
    color: #d3e8fa;
  }

  .btn {
    height: 20px;
    padding: 0;
    display: flex;
    align-items: center;
    justify-content: center;
    background: #d0cbe5;
    border: 1px solid #f5f2fc;
    border-right: 2px solid #7c778f;
    border-bottom: 2px solid #7c778f;
    font-family: inherit;
    font-size: 11px;
    color: #35333f;
  }

  .btn.wide {
    width: 106px;
    margin: 0 0 7px 1px;
    flex: none;
    letter-spacing: -0.1px;
  }

  .actions {
    display: flex;
    gap: 7px;
  }

  .actions .btn {
    width: 67px;
    font-size: 10.5px;
  }

  .actions .ok {
    border: 1px solid #6d687e;
    border-right-width: 2px;
    border-bottom-width: 2px;
    padding-right: 12px;
  }

  .led {
    width: 11px;
    height: 11px;
    border-radius: 50%;
    margin-right: 6px;
  }

  .ok .led {
    margin-right: 16px;
  }

  .green {
    background: radial-gradient(circle at 35% 30%, #b6f5ae, #2aaa26 45%, #14581b);
  }

  .red {
    background: radial-gradient(circle at 35% 30%, #ffb4ac, #cf2c33 45%, #6e1420);
  }

  /* ===== Status line ===== */
  .status {
    height: 21px;
    flex: none;
    display: flex;
    align-items: center;
    background: #d1cbe5;
    padding: 0 0 2px 2px;
  }

  .status-msg {
    font-size: 11px;
    letter-spacing: -0.27px;
  }

  .status-xyz {
    margin-left: auto;
    margin-right: 4px;
  }

  .status-input {
    width: 281px;
    height: 18px;
    margin-right: 2px;
    background: #fff;
    border: 1px solid #77727f;
    border-width: 1px 0 0 1px;
    padding-left: 3px;
    line-height: 16px;
  }

  .status-btn {
    width: 31px;
    height: 19px;
    display: flex;
    align-items: center;
    justify-content: center;
    border: 1px solid #f5f2fc;
    border-right-color: #7d788e;
  }

  .status-btn svg {
    width: 15px;
    height: 15px;
  }

  /* ===== Taskbar ===== */
  .taskbar {
    height: 38px;
    flex: none;
    display: flex;
    background: #052e4f;
    color: #b9cbd8;
  }

  .start {
    width: 44px;
    display: flex;
    align-items: center;
    justify-content: center;
  }

  .start svg {
    width: 18px;
    height: 18px;
  }

  .search {
    width: 322px;
    display: flex;
    align-items: center;
    padding: 0 10px 0 9px;
    background: #3a5b73;
    color: #93a9b9;
    font-size: 14px;
  }

  .search span {
    margin-left: 9px;
    letter-spacing: -0.4px;
  }

  .search svg {
    width: 17px;
    height: 17px;
    margin-left: auto;
  }

  .cortana {
    width: 20px;
    height: 20px;
    border: 3px solid #d9e4ec;
    border-radius: 50%;
  }

  .app {
    width: 46.3px;
    display: flex;
    align-items: center;
    justify-content: center;
  }

  .app svg {
    width: 22px;
    height: 22px;
  }

  .app.open {
    background: #104976;
  }

  .tray {
    margin-left: auto;
    display: flex;
    align-items: center;
    padding-right: 22px;
  }

  .tray svg {
    width: 22px;
    height: 18px;
    margin-right: 1px;
  }

  .tray .battery {
    margin-left: -3px;
  }

  .tray .wifi {
    margin-right: 0;
  }

  .tray .keyboard {
    margin-left: 3px;
  }

  .lang {
    margin-left: 10px;
    font-size: 11px;
  }

  .clock {
    width: 72px;
    margin-top: -2px;
    display: flex;
    flex-direction: column;
    align-items: center;
    line-height: 15px;
    font-size: 11.5px;
    letter-spacing: -0.2px;
  }

  .tray .note {
    width: 18px;
    height: 18px;
    margin: 0;
  }
</style>
